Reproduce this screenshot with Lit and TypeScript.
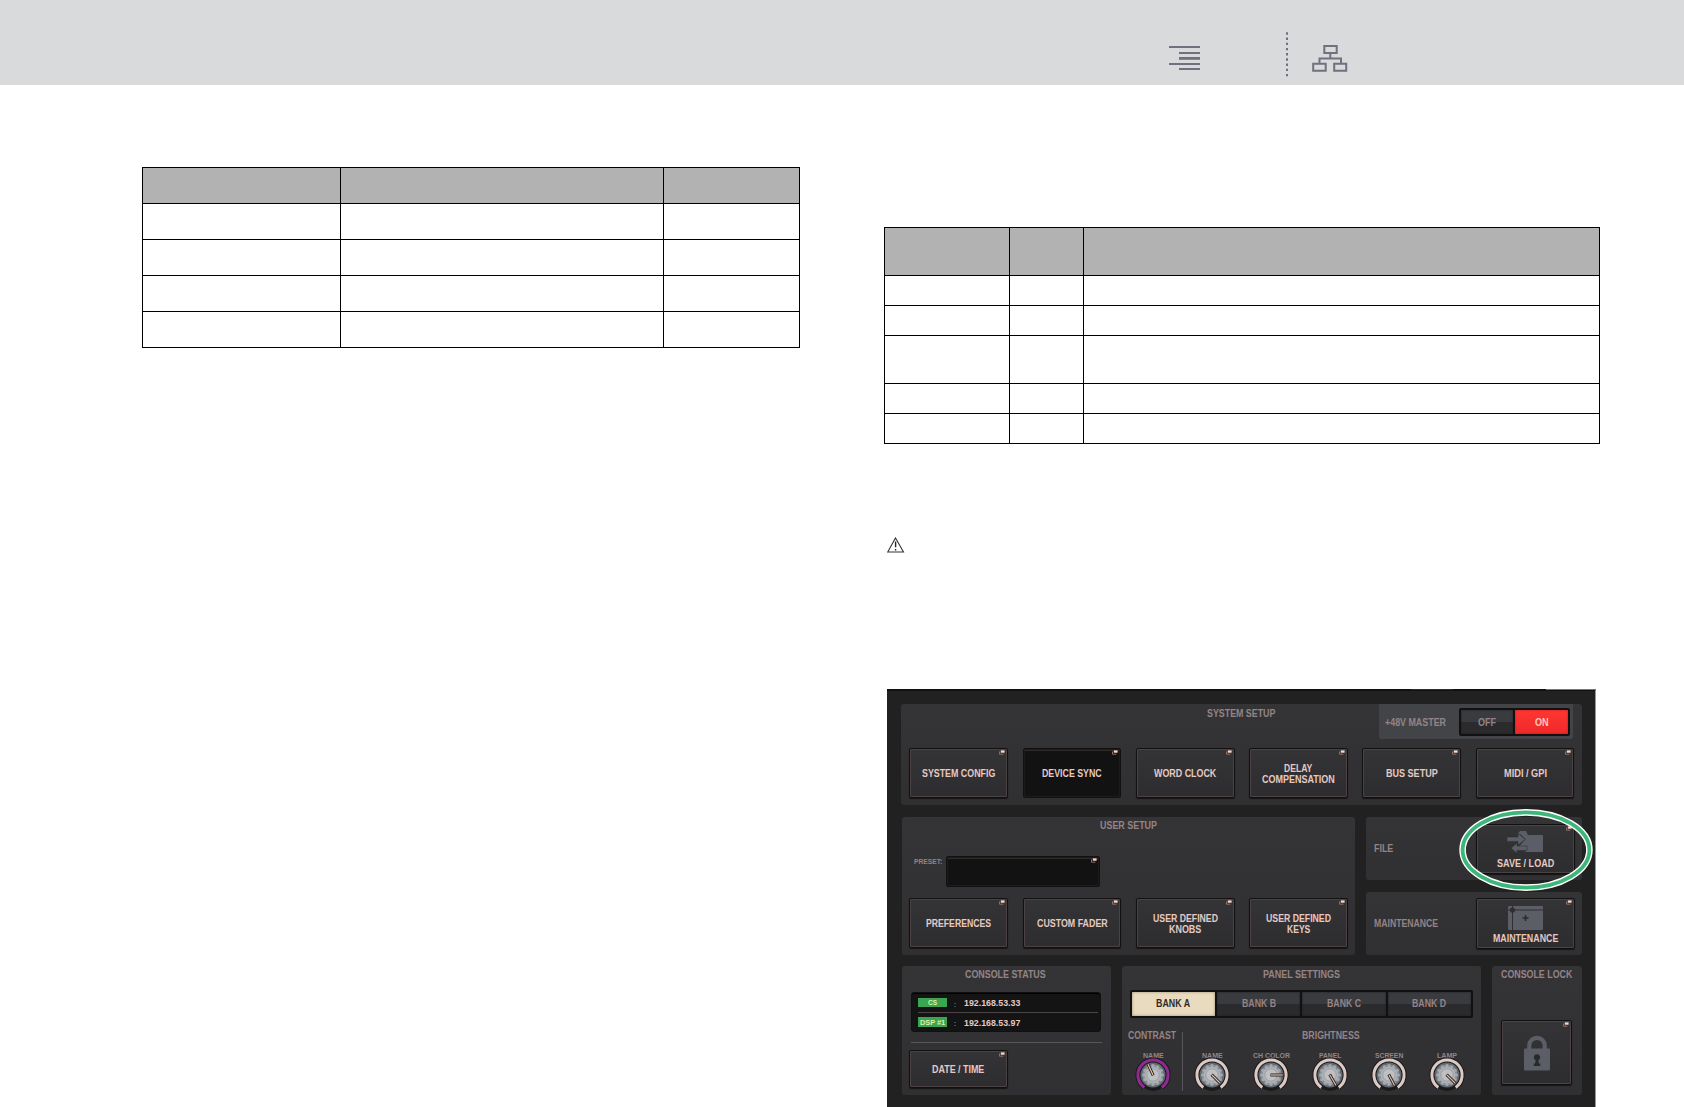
import { LitElement, html, svg, css } from "lit";
import { customElement, property } from "lit/decorators.js";

/** A caption set to a fixed width; its box is exactly the cap height. */
const label = (text: string, w: number, tone = "dim", size = 10) => {
  const cap = Math.round(size * 7.2) / 10;
  return html`<svg class="label ${tone}" width=${w} height=${cap}>
    <text x="0" y=${cap} font-size=${size} textLength=${w} lengthAdjust="spacingAndGlyphs">${text}</text>
  </svg>`;
};

const labelStyles = css`
  .label {
    display: block;
    overflow: visible;
    flex: none;
    font-family: "Liberation Sans", Arial, sans-serif;
    font-weight: 700;
  }
  .dim { fill: #948486; }
  .lit { fill: #e6c9c2; }
  .ink { fill: #302a26; }
  .pale { fill: #ffc9b8; }
  .lime { fill: #e0f2a4; }
`;

@customElement("pop-button")
class PopButton extends LitElement {
  @property({ type: Boolean, reflect: true }) dark = false;
  static styles = css`
    :host {
      display: block;
      box-sizing: border-box;
      position: relative;
      background: linear-gradient(#343436, #2d2d2f);
      border: 1px solid #111;
      border-radius: 2px;
      box-shadow: inset 0 0 0 1px #4b4244, 0 1px 1px #151515;
    }
    :host([dark]) { background: #121212; box-shadow: inset 0 0 0 1px #1f1b1c, inset 0 2px 0 #302a2b; }
    .body {
      height: 100%;
      display: flex;
      flex-direction: column;
      align-items: center;
      justify-content: center;
      gap: 3.5px;
    }
    .corner { position: absolute; top: 1px; right: 2px; display: block; }
  `;
  render() {
    return html`<div class="body"><slot></slot></div>
      <svg class="corner" width="6" height="5">
        <path d="M.5 1.5V4.2H4.4" fill="none" stroke="#8c6f68" stroke-width="1" />
        <rect x="1.8" y=".4" width="3.8" height="2.3" fill="#ffd5c5" />
      </svg>`;
  }
}

@customElement("level-knob")
class LevelKnob extends LitElement {
  @property() name = "";
  @property({ type: Number }) w = 20;
  @property({ type: Number }) angle = 0;
  @property() ring = "#dcc9c4";
  static styles = [
    labelStyles,
    css`
      :host { display: flex; flex-direction: column; align-items: center; width: 58.8px; gap: .6px; }
      .dial { display: block; overflow: visible; flex: none; }
    `,
  ];
  render() {
    const teeth = Array.from({ length: 12 }, (_, i) => {
      const a = (i * Math.PI) / 6;
      return svg`<circle cx=${9.4 * Math.cos(a)} cy=${9.4 * Math.sin(a)} r="1.6" fill="#a2a7ac" />`;
    });
    return html`${label(this.name, this.w, "dim", 6.8)}
      <svg class="dial" width="34" height="34" viewBox="-17 -17 34 34">
        <circle cy="1" r="15" fill="#1b1b1c" />
        <path d="M-8.7 12.4A15.1 15.1 0 1 1 8.7 12.4" fill="none" stroke="#1b1b1c" stroke-width="5" />
        <path d="M-8.7 12.4A15.1 15.1 0 1 1 8.7 12.4" fill="none" stroke=${this.ring} stroke-width="3" />
        <circle r="12.5" fill="#626a71" />
        <circle r="10.6" fill="#858b91" />
        ${teeth}
        <circle r="8.6" fill="#aeb1b5" />
        <circle r="6.2" fill="#bfc0c2" stroke="#929ba1" stroke-width=".8" />
        <g transform="rotate(${this.angle})">
          <path d="M0 .5V-12" stroke="#221e1e" stroke-width="3" />
          <path d="M0 0V-11.8" stroke="#efc0ae" stroke-width="1.2" />
        </g>
      </svg>`;
  }
}

@customElement("console-panel")
class ConsolePanel extends LitElement {
  static styles = [
    labelStyles,
    css`
      :host {
        display: block;
        position: relative;
        box-sizing: border-box;
        width: 709px;
        height: 418px;
        padding: 13.3px 13.5px 0 14px;
        background: #212121;
        border-top: 2px solid #111;
        border-right: 1px solid #999;
      }
      .group { box-sizing: border-box; background: linear-gradient(#343436, #303032); border-radius: 3px; }
      .col { display: flex; flex-direction: column; align-items: center; }
      .row { display: flex; }
      .system { height: 100.7px; padding-left: 8px; position: relative; }
      .system .title { padding: 5.6px 8px 0 0; display: flex; justify-content: center; height: 38.7px; box-sizing: border-box; }
      .system .keys { padding-top: 5px; }
      .keys { gap: 14.6px; }
      .key { width: 98.7px; height: 50.4px; flex: none; }
      .master {
        position: absolute; top: 0; right: 9px;
        width: 194.3px; height: 34.7px; box-sizing: border-box;
        padding: 1.2px 0 0 6.3px; display: flex; align-items: center; gap: 13px;
        background: #434448; border-radius: 0 0 2px 2px;
      }
      .toggle { width: 111px; height: 28px; box-sizing: border-box; display: flex; padding: 2px; gap: 2px; background: #111; border-radius: 2px; }
      .seg {
        flex: 1; display: flex; align-items: center; justify-content: center;
        background: linear-gradient(#3a3b3f 0 48%, #2b2b2d 52%);
        box-shadow: inset 0 0 2px #1c1c1d;
      }
      .seg.red { background: linear-gradient(#ff3634, #ee2a28); box-shadow: inset 0 0 2px #b01c1a; }
      .seg.cream { background: #e9dbbf; box-shadow: inset 0 0 3px #9a8a6c; }
      .middle { margin: 12px 0 11px 1px; gap: 11px; }
      .user { width: 453px; height: 138px; padding-top: 4.8px; }
      .user .title { margin-bottom: 27px; }
      .preset { align-self: stretch; padding-left: 11.6px; gap: 4.3px; margin-bottom: 11.3px; }
      .preset .label { margin-top: 3px; }
      .preset .slot { width: 154px; height: 30.7px; }
      .user .keys { align-self: stretch; padding-left: 7px; }
      .side { gap: 11.3px; }
      .box { width: 216px; height: 63.3px; padding: .6px 7.3px 0 8.3px; align-items: center; justify-content: space-between; }
      .art { display: block; flex: none; }
      .bottom { margin-left: 1px; gap: 11px; }
      .status { width: 208.6px; height: 129px; padding: 5.2px 0 0 7px; align-items: flex-start; }
      .status .title { margin-left: 55.6px; }
      .ips { margin: 13.8px 0 0 2.2px; width: 189.5px; height: 40.3px; box-sizing: border-box; padding: 0 2px 0 5.3px; background: #141414; border-radius: 3px; border: 1px solid #101010; box-shadow: inset 0 1px 0 #000; align-items: stretch; justify-content: center; }
      .ip { height: 19px; align-items: center; }
      .ip + .ip { border-top: 1px solid #4a4446; }
      .badge { width: 29.5px; height: 9.4px; background: #3aa552; display: flex; align-items: center; justify-content: center; margin-right: 6.5px; }
      .ip .colon { margin: 2px 8px 0 0; }
      .rule { width: 191px; height: 1px; margin: 9.7px 0 7px 1.5px; background: #57575a; }
      .date { width: 98.7px; height: 37.4px; }
      .settings { width: 359px; height: 129px; padding-top: 5.2px; }
      .banks { width: 343.4px; height: 28px; margin: 11.4px 0 0; box-sizing: border-box; padding: 2px; gap: 2px; background: #111; border-radius: 2px; }
      .levels { align-self: stretch; margin-top: 14.3px; }
      .contrast { width: 61.6px; border-right: 1px solid #57575a; height: 59px; box-sizing: border-box; gap: 13.6px; }
      .contrast .label { margin-right: 1px; }
      .contrast level-knob { margin-left: 2px; }
      .bright { gap: 13.6px; margin-left: -.6px; }
      .bright > .label { margin-left: 1.5px; }
      .levels .col { justify-content: flex-start; }
      .lock { width: 90px; height: 129px; padding-top: 5.2px; }
      .lockkey { width: 71px; height: 65.4px; margin-top: 41.6px; }
      .ring { position: absolute; left: 570.3px; top: 117px; display: block; overflow: visible; }
      .edge { position: absolute; top: -2px; height: 1px; }
      .brown { left: 524px; width: 42px; background: #3a2c22; }
      .grey { right: -1px; width: 50px; background: #777; }
    `,
  ];

  render() {
    const key = (lines: [string, number][], dark = false) => html`
      <pop-button class="key" ?dark=${dark}>${lines.map(([t, w]) => label(t, w, "lit", 10.4))}</pop-button>`;
    return html`
      <span class="edge brown"></span><span class="edge grey"></span>
      <section class="group system">
        <div class="title">${label("SYSTEM SETUP", 68.4)}</div>
        <div class="master">
          ${label("+48V MASTER", 61)}
          <div class="toggle">
            <div class="seg">${label("OFF", 18)}</div>
            <div class="seg red">${label("ON", 13.7, "pale")}</div>
          </div>
        </div>
        <div class="row keys">
          ${key([["SYSTEM CONFIG", 73.3]])} ${key([["DEVICE SYNC", 59.7]], true)}
          ${key([["WORD CLOCK", 62.3]])} ${key([["DELAY", 28.3], ["COMPENSATION", 72.7]])}
          ${key([["BUS SETUP", 51.7]])} ${key([["MIDI / GPI", 43]])}
        </div>
      </section>

      <div class="row middle">
        <section class="group user col">
          <div class="title">${label("USER SETUP", 57)}</div>
          <div class="row preset">
            ${label("PRESET:", 28.3, "dim", 7.5)}
            <pop-button class="slot" dark></pop-button>
          </div>
          <div class="row keys">
            ${key([["PREFERENCES", 65]])} ${key([["CUSTOM FADER", 70.7]])}
            ${key([["USER DEFINED", 65], ["KNOBS", 32.3]])} ${key([["USER DEFINED", 65], ["KEYS", 23.3]])}
          </div>
        </section>
        <div class="col side">
          <section class="group row box">
            ${label("FILE", 19.3)}
            <pop-button class="key">
              <svg class="art" width="36" height="25" viewBox="0 0 36 25">
                <path d="M10.5 3L13 0H19L21 4H36V21H18.5V15.5H12L18.5 8L13 3Z" fill="#5b5e66" />
                <path d="M0 6H11V2.4L18.3 8.3L11 14.2V10.4H0Z" fill="#5b5e66" stroke="#2f2f31" stroke-width=".5" />
                <path d="M20 15H10V12L4 17.2L10 22.2V19.4H20Z" fill="#5b5e66" stroke="#2f2f31" stroke-width=".5" />
              </svg>
              ${label("SAVE / LOAD", 57.3, "lit")}
            </pop-button>
          </section>
          <section class="group row box">
            ${label("MAINTENANCE", 64)}
            <pop-button class="key">
              <svg class="art" width="35" height="26" viewBox="0 0 35 26">
                <rect y="1" width="35" height="24" rx="1" fill="#5b5e66" />
                <path d="M4.5 1V25M0 5H35" stroke="#2f2f31" />
                <circle cx="4.5" cy="5" r="2.6" fill="#2f2f31" />
                <path d="M17.5 10V16M14.5 13H20.5" stroke="#2b2b2d" stroke-width="1.6" />
              </svg>
              ${label("MAINTENANCE", 65.3, "lit")}
            </pop-button>
          </section>
        </div>
      </div>

      <div class="row bottom">
        <section class="group status col">
          <div class="title">${label("CONSOLE STATUS", 80.7)}</div>
          <div class="ips col">
            ${[["CS", 9, "192.168.53.33"], ["DSP #1", 25, "192.168.53.97"]].map(
              ([n, w, ip]) => html`<div class="row ip">
                <span class="badge">${label(n as string, w as number, "lime", 7)}</span>
                <span class="colon">${label(":", 2, "dim", 8)}</span>
                ${label(ip as string, 56.3, "lit", 9.6)}
              </div>`
            )}
          </div>
          <div class="rule"></div>
          <pop-button class="date">${label("DATE / TIME", 52.3, "lit", 10.4)}</pop-button>
        </section>

        <section class="group settings col">
          ${label("PANEL SETTINGS", 77)}
          <div class="row banks">
            ${["A", "B", "C", "D"].map(
              (b) => html`<div class="seg ${b === "A" ? "cream" : ""}">${label(`BANK ${b}`, 34, b === "A" ? "ink" : "dim")}</div>`
            )}
          </div>
          <div class="row levels">
            <div class="col contrast">
              ${label("CONTRAST", 48)}
              <level-knob name="NAME" w="20.7" angle="-25" ring="#8f2a93"></level-knob>
            </div>
            <div class="col bright">
              ${label("BRIGHTNESS", 57.7)}
              <div class="row">
                <level-knob name="NAME" w="20.7" angle="135"></level-knob>
                <level-knob name="CH COLOR" w="37" angle="90"></level-knob>
                <level-knob name="PANEL" w="22.3" angle="150"></level-knob>
                <level-knob name="SCREEN" w="28.3" angle="152"></level-knob>
                <level-knob name="LAMP" w="20" angle="135"></level-knob>
              </div>
            </div>
          </div>
        </section>

        <section class="group lock col">
          ${label("CONSOLE LOCK", 71.3)}
          <pop-button class="lockkey">
            <svg class="art" width="26" height="36" viewBox="0 0 26 36">
              <path d="M5.3 14V10.5A7.7 7.7 0 0 1 20.7 10.5V14" fill="none" stroke="#5b5e66" stroke-width="4.2" />
              <rect y="13.5" width="26" height="22" rx="1" fill="#5b5e66" />
              <path d="M13 19.2A3.1 3.1 0 0 1 14.4 25.1L14.8 28.5H16.2V31H9.8V28.5H11.2L11.6 25.1A3.1 3.1 0 0 1 13 19.2Z" fill="#29292b" />
            </svg>
          </pop-button>
        </section>
      </div>

      <svg class="ring" width="136" height="84">
        <ellipse cx="68" cy="42" rx="63.4" ry="37.6" fill="none" stroke="#fff" stroke-width="6.6" />
        <ellipse cx="68" cy="42" rx="63.4" ry="37.6" fill="none" stroke="#3db67a" stroke-width="3.8" />
      </svg>
    `;
  }
}

@customElement("app-root")
class AppRoot extends LitElement {
  static styles = css`
    :host { display: block; width: 1684px; height: 1107px; overflow: hidden; background: #fff; font-family: "Liberation Sans", Arial, sans-serif; }
    .bar { height: 85px; box-sizing: border-box; padding: 32px 0 0 1169px; background: #d9dadc; display: flex; align-items: flex-start; }
    .bar svg { display: block; flex: none; }
    .menu { margin-top: 14px; }
    .dots { margin-left: 86px; }
    .map { margin-left: 24.4px; margin-top: 12px; }
    .page { display: flex; }
    .left { width: 742px; padding: 82px 0 0 142px; }
    .right { padding-top: 142px; }
    .table { display: grid; gap: 1px; padding: 1px; background: #000; }
    .cell { background: #fff; }
    .head { background: #b2b2b2; }
    .t1 { width: 656px; grid-template-columns: 197px 322px 135px; grid-template-rows: repeat(5, 35px); }
    .t2 { width: 714px; grid-template-columns: 124px 73px 515px; grid-template-rows: 47px 29px 29px 47px 29px 29px; }
    .warn { display: block; margin: 93px 0 136px 3px; }
    .panel { margin-left: 3.3px; }
  `;
  private table(cls: string, rows: number) {
    return html`<div class="table ${cls}">
      ${Array.from({ length: rows * 3 }, (_, i) => html`<div class="cell ${i < 3 ? "head" : ""}"></div>`)}
    </div>`;
  }
  render() {
    return html`
      <header class="bar">
        <svg class="menu" width="31" height="26">
          <path d="M0 1H31M10 7H31M0 18H31M10 23H31" stroke="#70707e" stroke-width="2" />
          <path d="M10 12.4H31" stroke="#70707e" stroke-width="2.8" />
        </svg>
        <svg class="dots" width="2" height="46">
          <path d="M1 .3V46" stroke="#70707e" stroke-width="2" stroke-dasharray="2.4 2.8" />
        </svg>
        <svg class="map" width="36" height="30" fill="none" stroke="#70707e" stroke-width="2">
          <path d="M12.3 2H24.7V9H12.3ZM1.2 19.7H13.7V26.7H1.2ZM22.2 19.7H34.2V26.7H22.2ZM18.3 9V14.5M7.5 19V14.4H29V19" />
        </svg>
      </header>
      <main class="page">
        <div class="left">${this.table("t1", 5)}</div>
        <div class="right">
          ${this.table("t2", 6)}
          <svg class="warn" width="18" height="16" fill="none" stroke="#333">
            <path d="M8.5 .9L16.5 15H.7Z" stroke-width="1.1" />
            <path d="M8.6 4.6V10.3M8.6 12V13.4" stroke-width="1.4" stroke="#222" />
          </svg>
          <console-panel class="panel"></console-panel>
        </div>
      </main>
    `;
  }
}
